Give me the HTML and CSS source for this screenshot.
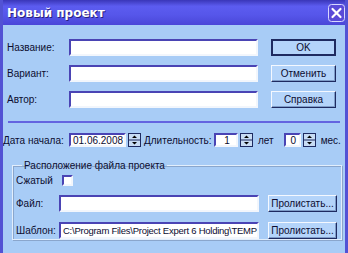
FILE: index.html
```html
<!DOCTYPE html>
<html lang="ru">
<head>
  <meta charset="UTF-8" />
  <title>Новый проект</title>
  <link rel="stylesheet" href="styles.css">
</head>
<body>
  <div class="window">
    <div class="titlebar">
      <span class="title">Новый проект</span>
      <span class="close">
        <svg width="17" height="18" viewBox="0 0 17 18">
          <rect x="0.5" y="0.5" width="16" height="17" rx="3" fill="#5a4ad8" stroke="#d8d8ff"/>
          <path d="M4.5 5 L12.5 13 M12.5 5 L4.5 13" stroke="#fff" stroke-width="2.2" stroke-linecap="round"/>
        </svg>
      </span>
    </div>

    <div class="client">
      <div class="top">
        <div class="fields">
          <div class="row"><span class="lbl">Название:</span><span class="edit wide"></span></div>
          <div class="row"><span class="lbl">Вариант:</span><span class="edit wide"></span></div>
          <div class="row"><span class="lbl">Автор:</span><span class="edit wide"></span></div>
        </div>
        <div class="buttons">
          <span class="btn default">OK</span>
          <span class="btn">Отменить</span>
          <span class="btn">Справка</span>
        </div>
      </div>

      <div class="sep"></div>

      <div class="date-row">
        <span class="lbl date-lbl">Дата начала:</span>
        <span class="edit date">01.06.2008</span>
        <span class="spin"><svg width="13" height="14" viewBox="0 0 13 14"><rect x="0.5" y="0.5" width="12" height="13" fill="#c8dcf4" stroke="#1e2a60"/><line x1="1" y1="7" x2="12" y2="7" stroke="#1e2a60"/><path d="M4 5 L6.5 2.5 L9 5 Z M4 9 L6.5 11.5 L9 9 Z" fill="#000"/></svg></span>
        <span class="lbl dur">Длительность:</span>
        <span class="edit num years">1</span>
        <span class="spin"><svg width="13" height="14" viewBox="0 0 13 14"><rect x="0.5" y="0.5" width="12" height="13" fill="#c8dcf4" stroke="#1e2a60"/><line x1="1" y1="7" x2="12" y2="7" stroke="#1e2a60"/><path d="M4 5 L6.5 2.5 L9 5 Z M4 9 L6.5 11.5 L9 9 Z" fill="#000"/></svg></span>
        <span class="lbl unit">лет</span>
        <span class="edit num months">0</span>
        <span class="spin"><svg width="13" height="14" viewBox="0 0 13 14"><rect x="0.5" y="0.5" width="12" height="13" fill="#c8dcf4" stroke="#1e2a60"/><line x1="1" y1="7" x2="12" y2="7" stroke="#1e2a60"/><path d="M4 5 L6.5 2.5 L9 5 Z M4 9 L6.5 11.5 L9 9 Z" fill="#000"/></svg></span>
        <span class="lbl unit">мес.</span>
      </div>

      <fieldset class="group">
        <legend>Расположение файла проекта</legend>
        <div class="check-row"><span class="lbl">Сжатый</span><span class="check"></span></div>
        <div class="path-row"><span class="lbl path-lbl">Файл:</span><span class="edit path"></span><span class="btn browse">Пролистать...</span></div>
        <div class="path-row"><span class="lbl path-lbl">Шаблон:</span><span class="edit path">C:\Program Files\Project Expert 6 Holding\TEMP</span><span class="btn browse">Пролистать...</span></div>
      </fieldset>
    </div>
  </div>
</body>
</html>
```

FILE: styles.css
```css
:root {
  --frame: #5252d4;
  --face: #a8ccf6;
  --text: #0c0c30;
  --dark: #1e2a60;
}
body {
  margin: 0;
  font-family: 'Liberation Sans', Arial, sans-serif;
  font-size: 10px;
  color: var(--text);
}
.lbl, .btn, .edit, legend {
  white-space: nowrap;
}
.window {
  width: 342px;
  height: 253px;
  border: 3px solid var(--frame);
  border-top: none;
  background-color: var(--face);
  overflow: hidden;
}
.titlebar {
  height: 25px;
  margin: 0 -3px;
  display: flex;
  align-items: center;
  justify-content: space-between;
  padding: 0 3px 0 7px;
  background: linear-gradient(#3a36b8 0%, #5c5cf0 25%, #5656ea 60%, #4a46d8 100%);
}
.title {
  color: #fff;
  font-family: 'DejaVu Sans', sans-serif;
  font-weight: bold;
  font-size: 12px;
  text-shadow: 1px 1px 0 #28207a;
}
.close {
  display: flex;
  margin-top: 1px;
}

/* верхний блок */
.top {
  display: flex;
  padding: 14px 0 0 4px;
}
.fields {
  display: flex;
  flex-direction: column;
  gap: 9px;
}
.row {
  display: flex;
  align-items: center;
}
.row .lbl {
  width: 62px;
}
.edit {
  box-sizing: border-box;
  height: 17px;
  background-color: #fff;
  border: 2px solid #f2f6fc;
  border-top-color: #4a44b4;
  border-left-color: #4a44b4;
  display: flex;
  align-items: center;
  padding-left: 2px;
  overflow: hidden;
}
.wide {
  width: 189px;
}
.buttons {
  display: flex;
  flex-direction: column;
  gap: 9px;
  margin-left: 13px;
}
.btn {
  box-sizing: border-box;
  width: 65px;
  height: 17px;
  display: flex;
  align-items: center;
  justify-content: center;
  background-color: #b4d4fa;
  border: 1px solid var(--dark);
  border-top-color: #f4f8ff;
  border-left-color: #f4f8ff;
  box-shadow: inset -1px -1px 0 #7e9cc8;
}
.btn.default {
  border: 2px solid var(--dark);
  box-shadow: none;
}

.sep {
  height: 2px;
  margin: 13px 5px 0 5px;
  background-color: #6464e0;
}

/* строка даты */
.date-row {
  display: flex;
  align-items: center;
  margin-top: 10px;
  height: 14px;
}
.date-row .edit {
  height: 14px;
}
.date-lbl {
  width: 66px;
}
.date {
  width: 57px;
}
.spin {
  display: flex;
  margin-left: 2px;
}
.dur {
  margin-left: 3px;
  width: 70px;
}
.years {
  width: 24px;
  justify-content: center;
}
.months {
  width: 17px;
  justify-content: center;
}
.unit {
  margin-left: 5px;
}
.months {
  margin-left: 10px;
}

/* группа */
.group {
  margin: 13px 3px 0 9px;
  padding: 3px 0 0 3px;
  height: 75px;
  border: 1px solid #e2eefc;
  box-shadow: inset 1px 1px 0 #8aa6cc, 1px 1px 0 #8aa6cc;
}
.group legend {
  padding: 0 2px;
  margin-left: 6px;
}
.check-row {
  display: flex;
  align-items: center;
  height: 12px;
}
.check {
  box-sizing: border-box;
  width: 11px;
  height: 11px;
  margin-left: 9px;
  background-color: #fff;
  border: 2px solid #f2f6fc;
  border-top-color: #4a44b4;
  border-left-color: #4a44b4;
}
.path-row {
  display: flex;
  align-items: center;
  margin-top: 9px;
}
.path-row + .path-row {
  margin-top: 10px;
}
.path-lbl {
  width: 43px;
}
.path {
  width: 200px;
  font-size: 9.5px;
  letter-spacing: -0.25px;
}
.browse {
  width: 69px;
  margin-left: 9px;
}
```
